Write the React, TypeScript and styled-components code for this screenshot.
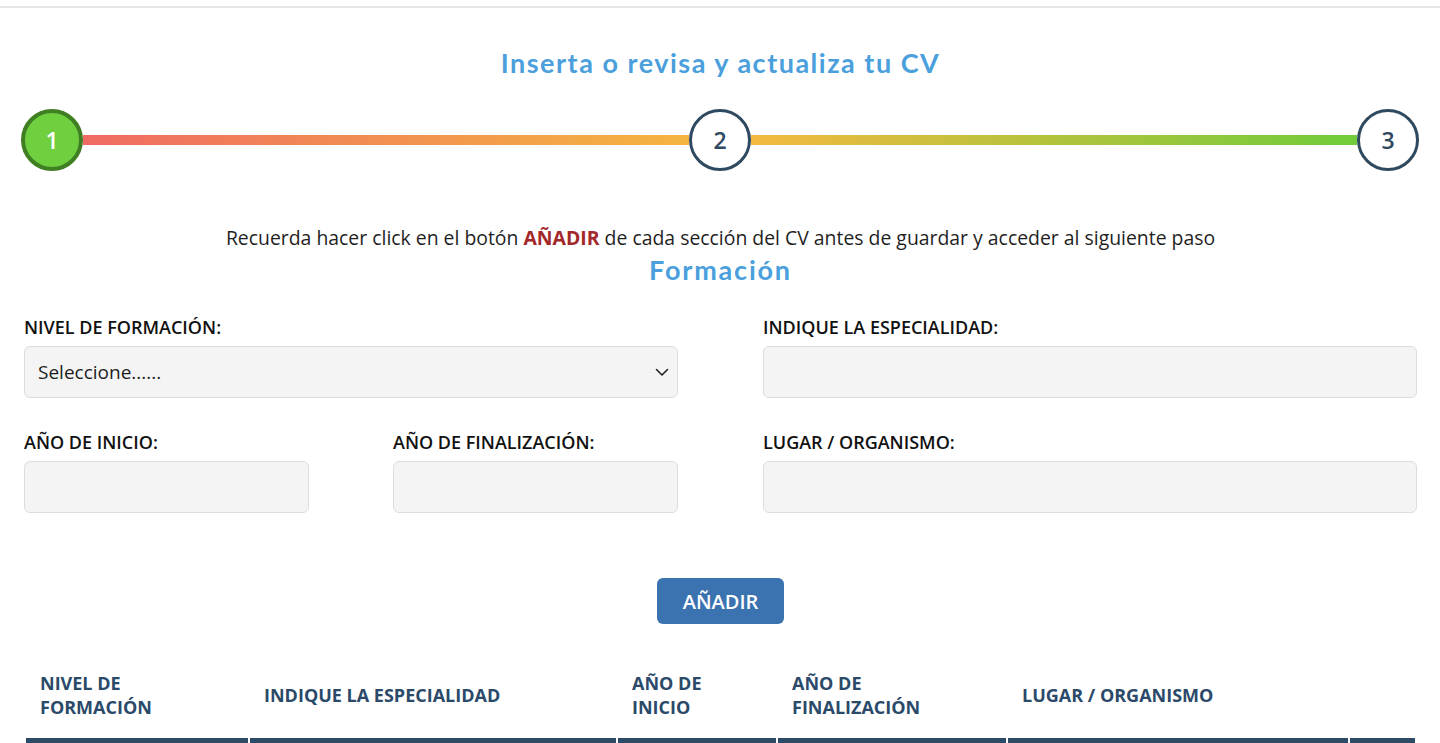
import styled, { createGlobalStyle } from "styled-components";

const GlobalStyle = createGlobalStyle`
    html, body {
        margin: 0;
        padding: 0;
        background: #ffffff;
        overflow: hidden;
    }
    body {
        font-family: "Open Sans", "Liberation Sans", sans-serif;
        color: #1d1d1d;
    }
    * {
        box-sizing: border-box;
    }
`;

type StepProps = {
    $done?: boolean;
};

const columns = [
    { lines: ['NIVEL DE', 'FORMACIÓN'], width: 222 },
    { lines: ['INDIQUE LA ESPECIALIDAD'], width: 366 },
    { lines: ['AÑO DE', 'INICIO'], width: 158 },
    { lines: ['AÑO DE', 'FINALIZACIÓN'], width: 228 },
    { lines: ['LUGAR / ORGANISMO'], width: 340 },
    { lines: [], width: 65 },
];

export default function App() {
    return (
        <>
            <GlobalStyle />
            <TopRule />
            <Page>
                <Title>Inserta o revisa y actualiza tu CV</Title>

                <Stepper>
                    <StepCircle $done>1</StepCircle>
                    <StepLine $from="#ef6b63" $to="#f4b540" />
                    <StepCircle>2</StepCircle>
                    <StepLine $from="#f4b940" $to="#6fcc3a" />
                    <StepCircle>3</StepCircle>
                </Stepper>

                <Notice>
                    Recuerda hacer click en el botón <strong>AÑADIR</strong> de cada sección del CV antes de guardar y acceder al siguiente paso
                </Notice>
                <SectionTitle>Formación</SectionTitle>

                <FormGrid>
                    <Field>
                        <Label>NIVEL DE FORMACIÓN:</Label>
                        <SelectWrap>
                            <Select defaultValue="">
                                <option value="">Seleccione......</option>
                            </Select>
                            <Chevron width="14" height="9" viewBox="0 0 14 9">
                                <path d="M1.5 1.5 L7 7 L12.5 1.5" fill="none" stroke="#222" strokeWidth="1.6" strokeLinecap="round" strokeLinejoin="round" />
                            </Chevron>
                        </SelectWrap>
                    </Field>
                    <Field>
                        <Label>INDIQUE LA ESPECIALIDAD:</Label>
                        <Input />
                    </Field>
                    <HalfRow>
                        <Field>
                            <Label>AÑO DE INICIO:</Label>
                            <Input />
                        </Field>
                        <Field>
                            <Label>AÑO DE FINALIZACIÓN:</Label>
                            <Input />
                        </Field>
                    </HalfRow>
                    <Field>
                        <Label>LUGAR / ORGANISMO:</Label>
                        <Input />
                    </Field>
                </FormGrid>

                <ButtonRow>
                    <AddButton>AÑADIR</AddButton>
                </ButtonRow>

                <Table>
                    <colgroup>
                        {columns.map((c, i) => <col key={i} style={{ width: c.width }} />)}
                    </colgroup>
                    <thead>
                        <tr>
                            {columns.map((c, i) => (
                                <Th key={i}>
                                    {c.lines.map((l, j) => <div key={j}>{l}</div>)}
                                </Th>
                            ))}
                        </tr>
                    </thead>
                    <tbody>
                        <tr>
                            {columns.map((_, i) => <BarCell key={i} />)}
                        </tr>
                    </tbody>
                </Table>
            </Page>
        </>
    );
}

const TopRule = styled.div`
    height: 8px;
    border-bottom: 2px solid #e6e6e8;
`;

const Page = styled.div`
    display: flex;
    flex-direction: column;
    padding: 0 23px 0 24px;
`;

const Title = styled.h1`
    margin: 39px 0 0;
    font-family: Lato, "Open Sans", sans-serif;
    font-size: 27px;
    line-height: 32px;
    font-weight: 700;
    letter-spacing: 1.5px;
    color: #4a9fdc;
    text-align: center;
`;

const Stepper = styled.div`
    display: flex;
    align-items: center;
    margin: 30px -2px 0 -3px;
`;

const StepCircle = styled.div<StepProps>`
    flex: 0 0 auto;
    width: 62px;
    height: 62px;
    border-radius: 50%;
    display: flex;
    align-items: center;
    justify-content: center;
    border: ${p => p.$done ? '4px solid #3f7f22' : '3.5px solid #2f4960'};
    background: ${p => p.$done ? '#6fcf3f' : '#ffffff'};
    color: ${p => p.$done ? '#ffffff' : '#2f4960'};
    font-size: 23px;
    font-weight: 600;
`;

const StepLine = styled.div<{ $from: string; $to: string }>`
    flex: 1;
    height: 10px;
    margin-top: -1px;
    background: linear-gradient(90deg, ${p => p.$from}, ${p => p.$to});
`;

const Notice = styled.p`
    margin: 54px 0 0;
    font-size: 19.4px;
    line-height: 26px;
    font-weight: 400;
    color: #1f1f1f;
    text-align: center;

    strong {
        color: #a3282a;
        font-weight: 700;
    }
`;

const SectionTitle = styled.h2`
    margin: 3px 0 0;
    font-family: Lato, "Open Sans", sans-serif;
    font-size: 27px;
    line-height: 32px;
    font-weight: 700;
    letter-spacing: 1.8px;
    color: #4a9fdc;
    text-align: center;
`;

const FormGrid = styled.div`
    display: grid;
    grid-template-columns: 1fr 1fr;
    column-gap: 85px;
    row-gap: 33px;
    margin-top: 30px;
`;

const HalfRow = styled.div`
    display: grid;
    grid-template-columns: 1fr 1fr;
    column-gap: 84px;
`;

const Field = styled.div`
    display: flex;
    flex-direction: column;
    gap: 8px;
`;

const Label = styled.label`
    font-size: 18px;
    line-height: 22px;
    font-weight: 600;
    color: #111111;
`;

const Input = styled.input`
    height: 52px;
    border: 1px solid #dddddd;
    border-radius: 6px;
    background: #f4f4f4;
    padding: 0 14px;
    font-size: 18px;
    font-family: inherit;
`;

const SelectWrap = styled.div`
    position: relative;
`;

const Select = styled.select`
    width: 100%;
    height: 52px;
    border: 1px solid #dddddd;
    border-radius: 6px;
    background: #f4f4f4;
    padding: 0 13px;
    font-size: 19px;
    font-family: inherit;
    color: #1d1d1d;
    appearance: none;
`;

const Chevron = styled.svg`
    position: absolute;
    right: 9px;
    top: 22px;
    pointer-events: none;
`;

const ButtonRow = styled.div`
    display: flex;
    justify-content: center;
    margin-top: 65px;
`;

const AddButton = styled.button`
    width: 127px;
    height: 46px;
    border: none;
    border-radius: 6px;
    background: #3b72b0;
    color: #ffffff;
    font-family: inherit;
    font-size: 20px;
    font-weight: 600;
`;

const Table = styled.table`
    width: 1393px;
    margin-top: 35px;
    border-collapse: separate;
    border-spacing: 2px 0;
    table-layout: fixed;
`;

const Th = styled.th`
    padding: 12px 14px 19px;
    text-align: left;
    vertical-align: middle;
    font-size: 18px;
    line-height: 24px;
    font-weight: 700;
    color: #2b4a6a;
`;

const BarCell = styled.td`
    height: 30px;
    padding: 0;
    background: #2d4a66;
`;
